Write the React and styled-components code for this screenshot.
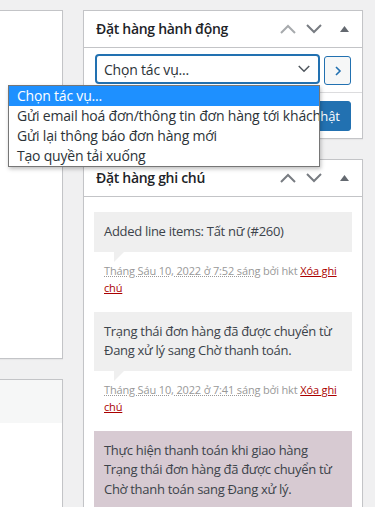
import styled, { createGlobalStyle } from "styled-components";

const GlobalStyle = createGlobalStyle`
  html, body {
    margin: 0;
    padding: 0;
    background: #f0f0f1;
    overflow: hidden;
  }
  body {
    font-family: "Open Sans", "Noto Sans", sans-serif;
    font-size: 13px;
    color: #3c434a;
  }
`;

const Page = styled.div`
  position: relative;
  box-sizing: border-box;
  display: flex;
  align-items: flex-start;
  gap: 20px;
  padding-top: 10px;
  height: 507px;
  overflow: hidden;
`;

const LeftCol = styled.div`
  display: flex;
  flex-direction: column;
  gap: 20px;
  width: 63px;
`;

const Box = styled.div`
  box-sizing: border-box;
  background: #fff;
  border: 1px solid #c3c4c7;
  border-left: 0;
  box-shadow: 0 1px 1px rgba(0, 0, 0, 0.04);
  height: ${(p) => p.$h}px;
`;

const BoxHead = styled.div`
  height: 43px;
  background: #f6f7f7;
`;

const RightCol = styled.div`
  display: flex;
  flex-direction: column;
  gap: 20px;
  width: 280px;
`;

const Postbox = styled.div`
  box-sizing: border-box;
  background: #fff;
  border: 1px solid #c3c4c7;
  box-shadow: 0 1px 1px rgba(0, 0, 0, 0.04);
`;

const PostboxHeader = styled.div`
  display: flex;
  align-items: center;
  height: 36px;
  border-bottom: 1px solid #c3c4c7;
`;

const Title = styled.h2`
  flex: 1;
  margin: 0;
  padding: 0 12px;
  font-size: 14px;
  font-weight: 600;
  letter-spacing: -0.3px;
  color: #1d2327;
  line-height: 1.4;
`;

const Handle = styled.button`
  display: flex;
  align-items: center;
  justify-content: center;
  width: ${(p) => p.$w}px;
  height: 36px;
  padding: 0;
  border: 0;
  background: none;
  color: ${(p) => (p.$disabled ? "#a7aaad" : "#787c82")};
`;

const ActionRow = styled.div`
  box-sizing: border-box;
  display: flex;
  align-items: flex-start;
  gap: 4px;
  height: 45px;
  padding: 6px 11px 0;
  border-bottom: 1px solid #dcdcde;
`;

const SelectBox = styled.div`
  box-sizing: border-box;
  display: flex;
  align-items: center;
  justify-content: space-between;
  width: 225px;
  height: 30px;
  padding: 0 8px 0 7px;
  border: 2px solid #2271b1;
  border-radius: 4px;
  font-size: 14px;
  letter-spacing: -0.2px;
  color: #2c3338;
`;

const GoButton = styled.button`
  box-sizing: border-box;
  display: flex;
  align-items: center;
  justify-content: center;
  width: 27px;
  height: 29px;
  margin-top: 2px;
  padding: 0;
  border: 1px solid #2271b1;
  border-radius: 3px;
  background: #f6f7f7;
  color: #2271b1;
`;

const SubmitRow = styled.div`
  box-sizing: border-box;
  display: flex;
  align-items: flex-start;
  justify-content: space-between;
  height: 45px;
  padding: 8px 11px 0;
`;

const TrashLink = styled.a`
  margin-top: 6px;
  font-size: 13px;
  color: #b32d2e;
  text-decoration: underline;
`;

const PrimaryButton = styled.button`
  box-sizing: border-box;
  height: 30px;
  padding: 0 10px;
  border: 1px solid #2271b1;
  border-radius: 3px;
  background: #2271b1;
  color: #fff;
  font-family: inherit;
  font-size: 13px;
`;

const Dropdown = styled.ul`
  position: absolute;
  top: 85px;
  left: 8px;
  width: 310px;
  margin: 0;
  padding: 0;
  list-style: none;
  background: #fff;
  border: 1px solid #767676;
  box-shadow: 1px 2px 4px rgba(0, 0, 0, 0.25);
  z-index: 10;
`;

const Option = styled.li`
  height: 20px;
  padding: 0 8px;
  line-height: 20px;
  font-size: 14px;
  letter-spacing: -0.2px;
  white-space: nowrap;
  overflow: hidden;
  color: ${(p) => (p.$active ? "#fff" : "#2c3338")};
  background: ${(p) => (p.$active ? "#1e90ff" : "#fff")};
`;

const Notes = styled.ul`
  margin: 0;
  padding: 15px 10px 0;
  list-style: none;
`;

const Note = styled.li`
  margin: 0;
`;

const NoteContent = styled.div`
  position: relative;
  padding: 10px;
  background: ${(p) => (p.$system ? "#d7cad2" : "#efefef")};
  line-height: 19.5px;
  letter-spacing: -0.3px;
  color: #3c434a;

  &::after {
    content: "";
    position: absolute;
    left: 20px;
    bottom: -10px;
    width: 0;
    height: 0;
    border-style: solid;
    border-width: 10px 10px 0 0;
    border-color: ${(p) => (p.$system ? "#d7cad2" : "#efefef")} transparent;
  }
`;

const Meta = styled.p`
  margin: 0;
  padding: 10px 10px 16px;
  font-size: 11px;
  line-height: 17px;
  letter-spacing: -0.15px;
  color: #999;
`;

const DateAbbr = styled.abbr`
  text-decoration: underline dotted;
  border: 0;
`;

const DeleteLink = styled.a`
  color: #a00;
  text-decoration: underline;
`;

function ChevronUp() {
  return (
    <svg width="16" height="10" viewBox="0 0 16 10" aria-hidden="true">
      <polyline points="1,9 8,2 15,9" fill="none" stroke="currentColor" strokeWidth="2" />
    </svg>
  );
}

function ChevronDown({ w = 16, h = 10, color }) {
  return (
    <svg width={w} height={h} viewBox="0 0 16 10" aria-hidden="true">
      <polyline points="1,1 8,8 15,1" fill="none" stroke={color || "currentColor"} strokeWidth="2" />
    </svg>
  );
}

function Triangle() {
  return (
    <svg width="9" height="6" viewBox="0 0 9 6" aria-hidden="true">
      <polygon points="0,6 4.5,0 9,6" fill="#646970" />
    </svg>
  );
}

function PanelHeader({ title, firstBox }) {
  return (
    <PostboxHeader>
      <Title>{title}</Title>
      <Handle type="button" $w={26} $disabled={firstBox} aria-label="Move up">
        <ChevronUp />
      </Handle>
      <Handle type="button" $w={26} aria-label="Move down">
        <ChevronDown />
      </Handle>
      <Handle type="button" $w={35} aria-label="Toggle panel">
        <Triangle />
      </Handle>
    </PostboxHeader>
  );
}

const options = [
  "Chọn tác vụ...",
  "Gửi email hoá đơn/thông tin đơn hàng tới khách hàng",
  "Gửi lại thông báo đơn hàng mới",
  "Tạo quyền tải xuống",
];

const notes = [
  {
    text: ["Added line items: Tất nữ (#260)"],
    date: "Tháng Sáu 10, 2022 ở 7:52 sáng",
  },
  {
    text: ["Trạng thái đơn hàng đã được chuyển từ Đang xử lý sang Chờ thanh toán."],
    date: "Tháng Sáu 10, 2022 ở 7:41 sáng",
  },
  {
    text: [
      "Thực hiện thanh toán khi giao hàng",
      "Trạng thái đơn hàng đã được chuyển từ Chờ thanh toán sang Đang xử lý.",
    ],
    date: "Tháng Sáu 10, 2022 ở 7:40 sáng",
    system: true,
  },
];

export default function App() {
  return (
    <>
      <GlobalStyle />
      <Page>
        <LeftCol>
          <Box $h={349} />
          <Box $h={200}>
            <BoxHead />
          </Box>
        </LeftCol>

        <RightCol>
          <Postbox>
            <PanelHeader title="Đặt hàng hành động" firstBox />
            <ActionRow>
              <SelectBox>
                <span>Chọn tác vụ...</span>
                <ChevronDown w={12} h={8} color="#50575e" />
              </SelectBox>
              <GoButton type="button" aria-label="Áp dụng">
                <svg width="8" height="12" viewBox="0 0 8 12" aria-hidden="true">
                  <polyline points="2,2 6,6 2,10" fill="none" stroke="currentColor" strokeWidth="1.6" />
                </svg>
              </GoButton>
            </ActionRow>
            <SubmitRow>
              <TrashLink href="#">Chuyển vào thùng rác</TrashLink>
              <PrimaryButton type="button">Cập nhật</PrimaryButton>
            </SubmitRow>
          </Postbox>

          <Postbox>
            <PanelHeader title="Đặt hàng ghi chú" />
            <Notes>
              {notes.map((n, i) => (
                <Note key={i}>
                  <NoteContent $system={n.system}>
                    {n.text.map((t, j) => (
                      <div key={j}>{t}</div>
                    ))}
                  </NoteContent>
                  <Meta>
                    <DateAbbr title={n.date}>{n.date}</DateAbbr> bởi hkt{" "}
                    <DeleteLink href="#">Xóa ghi chú</DeleteLink>
                  </Meta>
                </Note>
              ))}
            </Notes>
          </Postbox>
        </RightCol>

        <Dropdown role="listbox">
          {options.map((o, i) => (
            <Option key={o} $active={i === 0}>
              {o}
            </Option>
          ))}
        </Dropdown>
      </Page>
    </>
  );
}
